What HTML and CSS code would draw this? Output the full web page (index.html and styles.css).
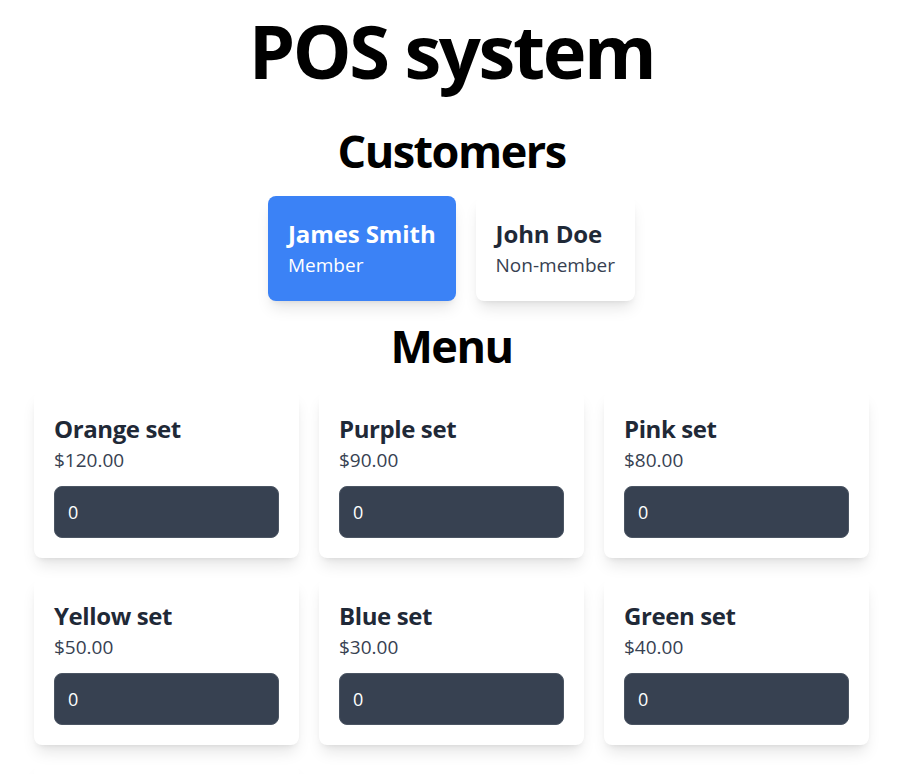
FILE: index.html
```html
<!DOCTYPE html>
<html lang="en">
<head>
<meta charset="utf-8">
<title>POS system</title>
<link rel="stylesheet" href="styles.css">
</head>
<body>
<main class="page">
  <h1 class="title">POS system</h1>

  <h2 class="section-title">Customers</h2>
  <div class="customers">
    <div class="customer customer-active">
      <div class="customer-name">James Smith</div>
      <div class="customer-type">Member</div>
    </div>
    <div class="customer">
      <div class="customer-name">John Doe</div>
      <div class="customer-type">Non-member</div>
    </div>
  </div>

  <h2 class="section-title section-menu">Menu</h2>
  <div class="menu-grid">
    <div class="item">
      <div class="item-name">Orange set</div>
      <div class="item-price">$120.00</div>
      <input class="item-qty" type="number" value="0">
    </div>
    <div class="item">
      <div class="item-name">Purple set</div>
      <div class="item-price">$90.00</div>
      <input class="item-qty" type="number" value="0">
    </div>
    <div class="item">
      <div class="item-name">Pink set</div>
      <div class="item-price">$80.00</div>
      <input class="item-qty" type="number" value="0">
    </div>
    <div class="item">
      <div class="item-name">Yellow set</div>
      <div class="item-price">$50.00</div>
      <input class="item-qty" type="number" value="0">
    </div>
    <div class="item">
      <div class="item-name">Blue set</div>
      <div class="item-price">$30.00</div>
      <input class="item-qty" type="number" value="0">
    </div>
    <div class="item">
      <div class="item-name">Green set</div>
      <div class="item-price">$40.00</div>
      <input class="item-qty" type="number" value="0">
    </div>
    <div class="item">
      <div class="item-name">Red set</div>
      <div class="item-price">$60.00</div>
      <input class="item-qty" type="number" value="0">
    </div>
  </div>
</main>
</body>
</html>
```

FILE: styles.css
```css
* {
  box-sizing: border-box;
}

body {
  margin: 0;
  background: #ffffff;
  font-family: "Open Sans", "Noto Sans", "Liberation Sans", sans-serif;
  color: #000000;
}

.page {
  width: 903px;
  padding-top: 1px;
  display: flex;
  flex-direction: column;
  align-items: center;
}

.title {
  margin: 0;
  font-size: 74px;
  line-height: 100px;
  font-weight: 700;
  letter-spacing: -2.4px;
}

.section-title {
  margin: 14px 0 9px;
  font-size: 45px;
  line-height: 72px;
  font-weight: 700;
  letter-spacing: -1.5px;
}

.section-menu {
  margin-top: 9px;
}

.customers {
  display: flex;
  gap: 20px;
  justify-content: center;
}

.customer {
  background: #ffffff;
  border-radius: 8px;
  padding: 20px 20px 22px;
  box-shadow: 0 10px 15px -3px rgba(0, 0, 0, 0.1), 0 4px 6px -4px rgba(0, 0, 0, 0.1);
  color: #1f2937;
}

.customer-active {
  background: #3b82f6;
  color: #ffffff;
}

.customer-name {
  font-size: 24px;
  line-height: 36px;
  font-weight: 700;
  letter-spacing: -0.1px;
}

.customer-type {
  font-size: 19px;
  line-height: 27px;
  color: #374151;
}

.customer-active .customer-type {
  color: #ffffff;
}

.menu-grid {
  width: 835px;
  display: grid;
  grid-template-columns: repeat(3, 1fr);
  gap: 20px;
}

.item {
  background: #ffffff;
  border-radius: 8px;
  padding: 20px;
  box-shadow: 0 10px 15px -3px rgba(0, 0, 0, 0.1), 0 4px 6px -4px rgba(0, 0, 0, 0.1);
  display: flex;
  flex-direction: column;
}

.item-name {
  font-size: 24px;
  line-height: 36px;
  font-weight: 700;
  color: #1f2937;
  letter-spacing: -0.4px;
}

.item-price {
  font-size: 19px;
  line-height: 27px;
  color: #374151;
}

.item-qty {
  margin-top: 12px;
  width: 100%;
  height: 52px;
  padding: 0 13px;
  border: 1px solid #4b5563;
  border-radius: 8px;
  background: #374151;
  color: #ffffff;
  font-family: inherit;
  font-size: 18px;
  outline: none;
  -moz-appearance: textfield;
}

.item-qty::-webkit-outer-spin-button,
.item-qty::-webkit-inner-spin-button {
  -webkit-appearance: none;
  margin: 0;
}
```
